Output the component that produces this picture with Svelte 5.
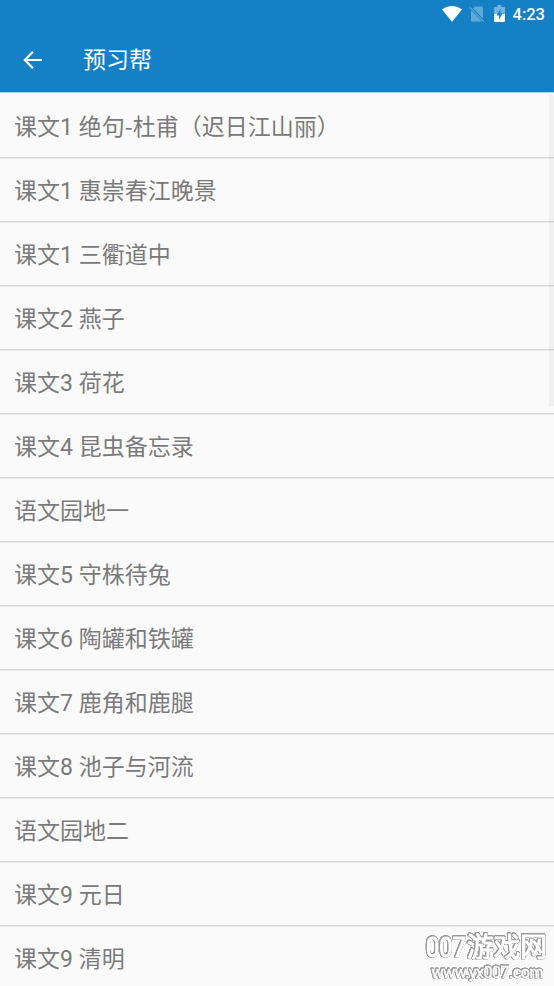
<script lang="ts">
    const lessons: string[] = [
        "课文1 绝句-杜甫（迟日江山丽）",
        "课文1 惠崇春江晚景",
        "课文1 三衢道中",
        "课文2 燕子",
        "课文3 荷花",
        "课文4 昆虫备忘录",
        "语文园地一",
        "课文5 守株待兔",
        "课文6 陶罐和铁罐",
        "课文7 鹿角和鹿腿",
        "课文8 池子与河流",
        "语文园地二",
        "课文9 元日",
        "课文9 清明",
    ];
</script>

<div class="screen">
    <header>
        <div class="status-bar">
            <svg class="wifi" width="20" height="16" viewBox="0 0 20 16">
                <path d="M0 3.6C5.6-1.2 14.4-1.2 20 3.6L10 15.8Z" fill="#fff" />
            </svg>
            <svg class="sim" width="16" height="18" viewBox="0 0 16 18">
                <path
                    d="M6 1.5H12.8Q14 1.5 14 2.7V13.4L4.2 3.4ZM2 5.2L13 16.5H3.2Q2 16.5 2 15.3Z"
                    fill="#5fa9d9"
                />
                <path d="M.8 2.4L14.8 16.6" stroke="#5fa9d9" stroke-width="1.3" />
            </svg>
            <svg class="battery" width="11" height="17" viewBox="0 0 11 17">
                <path
                    d="M3.5 0H7.5V2H10Q11 2 11 3V9H0V3Q0 2 1 2H3.5Z"
                    fill="#72b3dd"
                />
                <path d="M0 9H11V16Q11 17 10 17H1Q0 17 0 16Z" fill="#fff" />
                <path d="M6.4 4L2.5 10.4H5V14.5L8.7 8.3H6.4Z" fill="#1480c6" />
            </svg>
            <span class="clock">4:23</span>
        </div>
        <div class="toolbar">
            <button class="back" aria-label="返回">
                <svg width="20" height="20" viewBox="0 0 20 20" fill="none">
                    <path
                        d="M10 1.7L1.8 10L10 18.3M1.8 10H19"
                        stroke="#fff"
                        stroke-width="2.1"
                    />
                </svg>
            </button>
            <h1>预习帮</h1>
        </div>
    </header>
    <main>
        <ul>
            {#each lessons as lesson}
                <li>
                    {#each lesson.split(/(-)/) as part}<span
                            class:dash={part === "-"}>{part}</span
                        >{/each}
                </li>
            {/each}
        </ul>
        <div class="scrollbar"></div>
    </main>
    <div class="watermark">
        <svg width="130" height="56" viewBox="0 0 130 56">
            <text class="site" y="27"
                ><tspan x="5" textLength="40" lengthAdjust="spacingAndGlyphs"
                    >007</tspan
                ><tspan x="46" textLength="80" lengthAdjust="spacingAndGlyphs"
                    >游戏网</tspan
                ></text
            >
            <text class="url" x="10.5" y="48" textLength="112">www.yx007.com</text>
        </svg>
    </div>
</div>

<style>
    :global(body) {
        margin: 0;
        background: #fafafa;
    }

    .screen {
        position: relative;
        height: 986px;
        overflow: hidden;
        display: flex;
        flex-direction: column;
        background: #fafafa;
        font-family: Roboto, "Noto Sans CJK SC", sans-serif;
    }

    header {
        height: 92px;
        flex-shrink: 0;
        background: #1480c6;
        border-bottom: 1px solid #a9d2eb;
        color: #fff;
    }

    .status-bar {
        height: 28px;
        display: flex;
        align-items: center;
        justify-content: flex-end;
        padding-right: 9px;
    }

    .wifi {
        margin-bottom: 1px;
    }

    .sim {
        margin-left: 7px;
    }

    .battery {
        margin-left: 9px;
        margin-bottom: 1px;
    }

    .clock {
        margin-left: 8px;
        padding-top: 1px;
        font-size: 16.5px;
        font-weight: 500;
        line-height: 28px;
    }

    .toolbar {
        height: 64px;
        display: flex;
        align-items: center;
    }

    .back {
        margin: 0 0 0 23px;
        padding: 0;
        border: 0;
        background: none;
        display: flex;
    }

    h1 {
        margin: 0 0 0 40px;
        padding-top: 2px;
        font-size: 23px;
        font-weight: 400;
        line-height: 64px;
    }

    main {
        position: relative;
        flex: 1;
        min-height: 0;
    }

    ul {
        margin: 0;
        padding: 0;
        list-style: none;
    }

    li {
        height: 64px;
        padding-left: 14px;
        border-bottom: 1px solid #d9d9d9;
        box-shadow: 0 1px #ececec;
        box-sizing: border-box;
        font-size: 23px;
        line-height: 68px;
        color: #7a7a7a;
        white-space: nowrap;
    }

    li:first-child {
        height: 65px;
        padding-top: 1px;
    }

    .dash {
        font-family: "Noto Sans CJK SC", sans-serif;
        line-height: 1;
    }

    .scrollbar {
        position: absolute;
        top: 2px;
        right: 0;
        width: 5px;
        height: 311px;
        background: rgba(0, 0, 0, 0.04);
    }

    .watermark {
        position: absolute;
        right: 3px;
        bottom: 0;
        height: 56px;
    }

    .watermark text {
        fill: #fff;
        stroke: #fff;
        stroke-linejoin: round;
    }

    .watermark svg {
        filter: drop-shadow(0.6px 0 0 #999) drop-shadow(-0.6px 0 0 #999)
            drop-shadow(0 0.6px 0 #999) drop-shadow(0 -0.6px 0 #999);
    }

    .site {
        font-size: 27px;
        stroke-width: 1px;
    }

    .url {
        font-size: 16px;
        stroke-width: 0.4px;
    }
</style>
